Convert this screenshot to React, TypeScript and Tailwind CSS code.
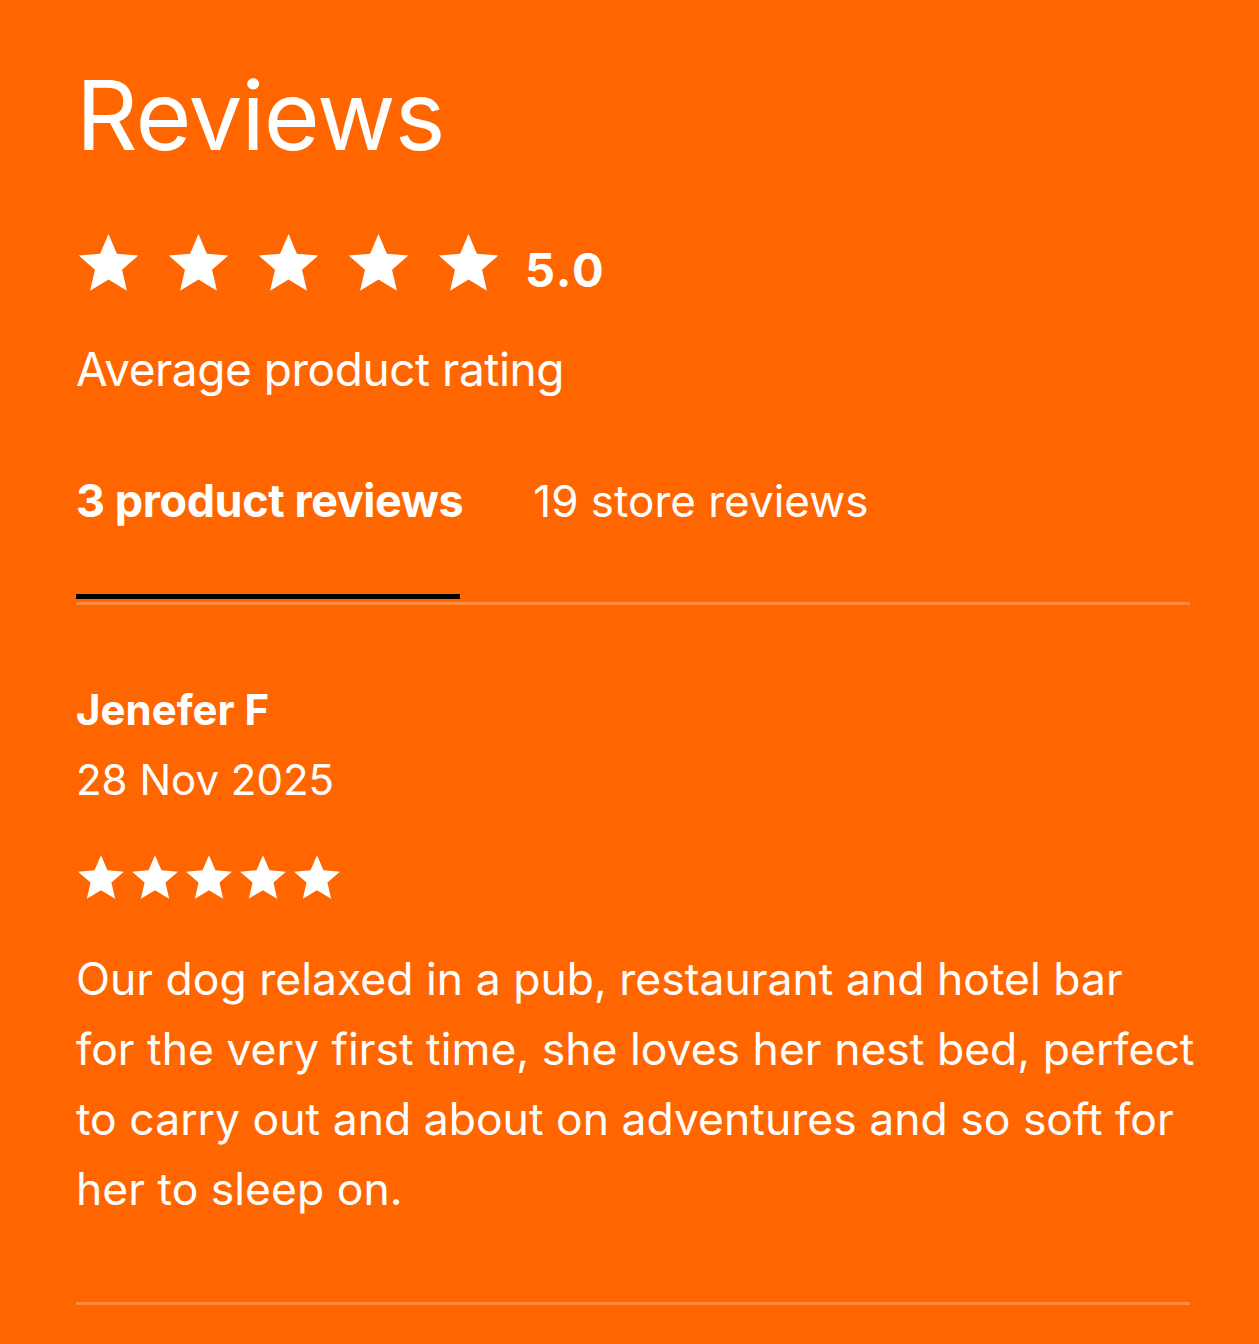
import React from "react";

const Star = ({ className }: { className?: string }) => (
  <svg viewBox="0 0 24 24" className={className} fill="currentColor">
    <path d="M12 1.5l3.09 7.26 7.91.7-6 5.2 1.8 7.74L12 18.3l-6.8 4.1 1.8-7.74-6-5.2 7.91-.7z" />
  </svg>
);

// line breaks follow the original layout
const bodyLines = [
  "Our dog relaxed in a pub, restaurant and hotel bar",
  "for the very first time, she loves her nest bed, perfect",
  "to carry out and about on adventures and so soft for",
  "her to sleep on.",
];

export default function App() {
  return (
    <div
      className="min-h-screen w-full bg-[#ff6600] text-white"
      style={{ fontFamily: "Inter, 'Noto Sans', sans-serif" }}
    >
      <div className="pl-[76px] pr-[69px] pt-[60px] pb-[38px]">
        <h1 className="m-0 text-[96px] font-normal leading-[110px] tracking-[-0.01em]">Reviews</h1>

        {/* average rating */}
        <div className="mt-[60px] flex items-end gap-[24px]">
          <div className="flex items-center gap-[25px]">
            {[0, 1, 2, 3, 4].map((i) => (
              <Star key={i} className="h-[65px] w-[65px]" />
            ))}
          </div>
          <span className="mb-[2px] text-[47px] font-bold leading-none tracking-[0.04em]">5.0</span>
        </div>
        <p className="mt-[44px] text-[46px] font-normal leading-[60px] tracking-[-0.01em]">Average product rating</p>

        {/* tabs */}
        <div className="mt-[72px]">
          <div className="flex items-end gap-[70px]">
            <button className="text-[45px] font-bold leading-[60px] tracking-[-0.01em]">3 product reviews</button>
            <button className="text-[44px] font-normal leading-[60px]">19 store reviews</button>
          </div>
          <div className="mt-[63px]">
            <div className="h-[5px] w-[384px] bg-black" />
            <div className="mt-[3px] h-[3px] w-full bg-[#ff8a3d]" />
          </div>
        </div>

        {/* review */}
        <div className="mt-[75px]">
          <p className="text-[42px] font-bold leading-[60px]">Jenefer F</p>
          <p className="mt-[10px] text-[42px] font-normal leading-[60px]">28 Nov 2025</p>
          <div className="mt-[42px] flex items-center gap-[4px]">
            {[0, 1, 2, 3, 4].map((i) => (
              <Star key={i} className="h-[50px] w-[50px]" />
            ))}
          </div>
          <p className="mt-[42px] text-[44.5px] font-normal leading-[70px]">
            {bodyLines.map((line) => (
              <span key={line} className="block whitespace-nowrap">
                {line}
              </span>
            ))}
          </p>
          <div className="mt-[78px] h-[3px] w-full bg-[#ff8a3d]" />
        </div>
      </div>
    </div>
  );
}
